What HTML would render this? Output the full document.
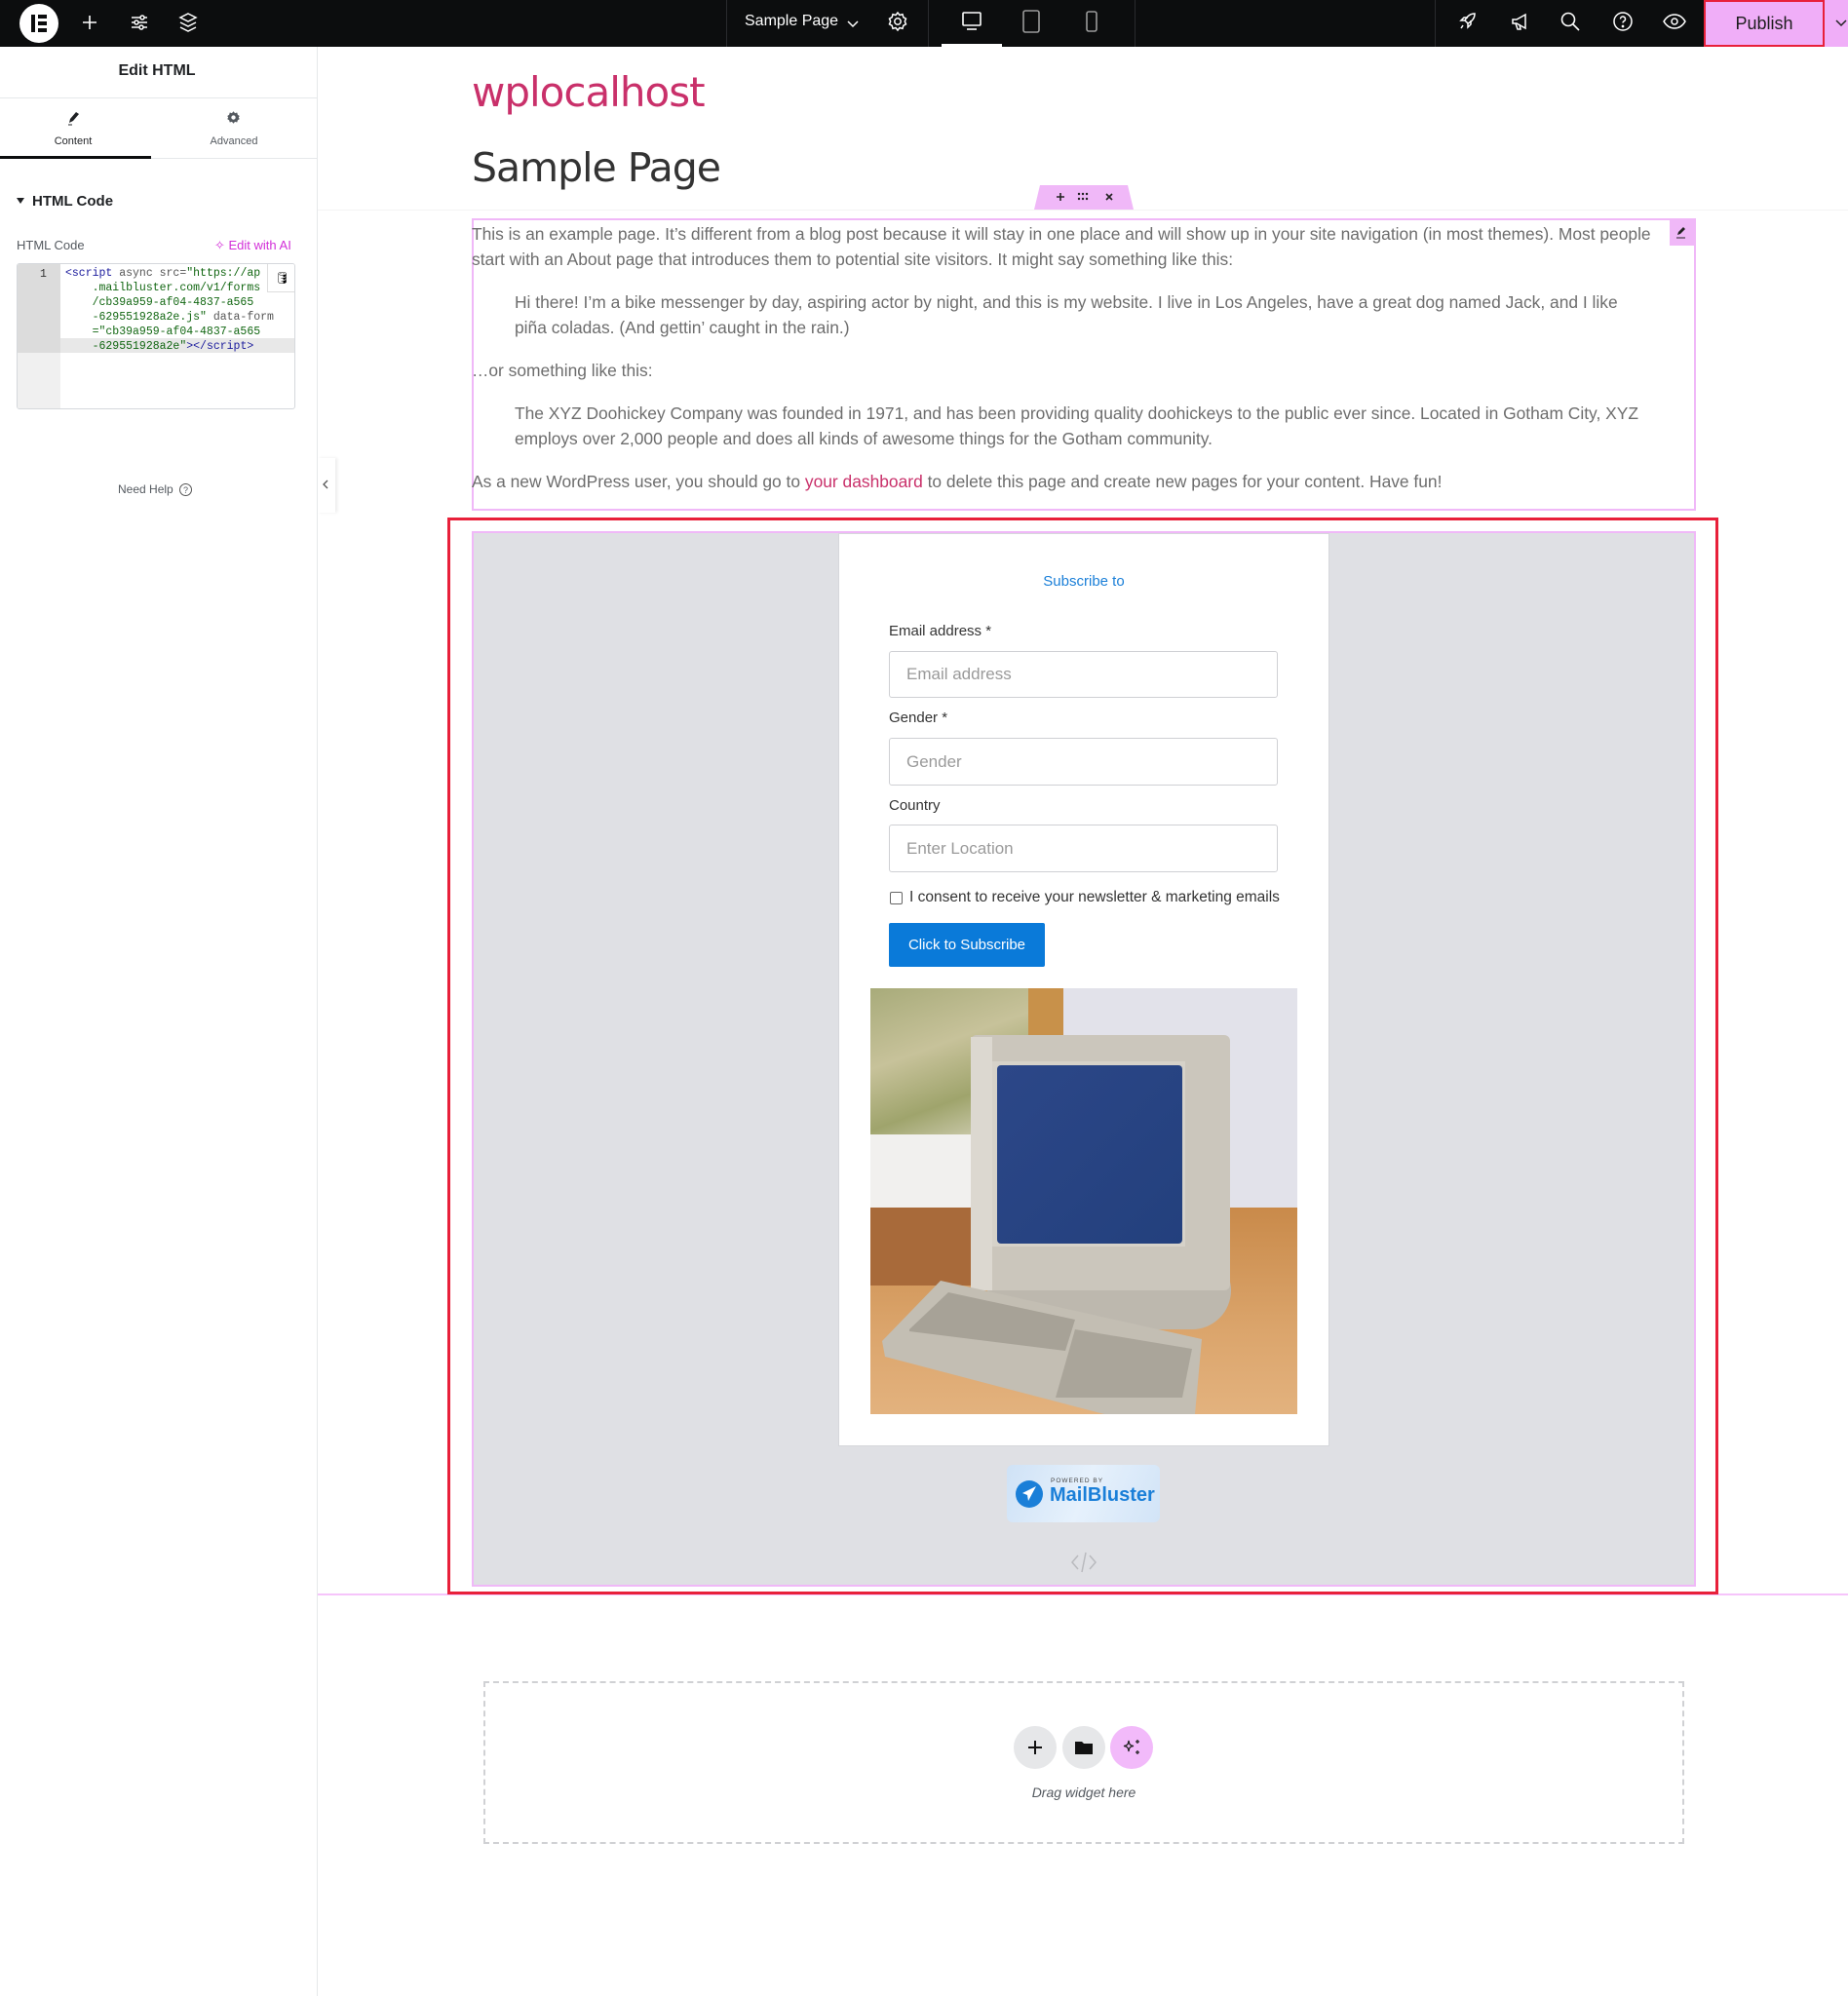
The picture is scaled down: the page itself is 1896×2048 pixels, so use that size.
<!DOCTYPE html>
<html><head><meta charset="utf-8">
<style>
*{box-sizing:border-box;margin:0;padding:0}
body{width:1896px;height:2046px;position:relative;background:#fff;font-family:"Liberation Sans",Arial,sans-serif;overflow:hidden}
.a{position:absolute}
.top{left:0;top:0;width:1896px;height:48px;background:#0c0d0e}
.vd{top:0;width:1px;height:48px;background:#2a2b2e}
svg{display:block}
.ptxt{font-size:17.4px;color:#6d6d6d;line-height:26px;white-space:nowrap}
.lbl{font-size:15px;color:#333}
.inp{border:1px solid #cfd0d4;border-radius:3px;background:#fff;font-size:17px;color:#9a9a9a;padding-left:17px;display:flex;align-items:center}
</style></head><body>

<!-- top bar -->
<div class="a top"></div>
<div class="a" style="left:20px;top:4px;width:40px;height:40px;border-radius:50%;background:#fff"></div>
<div class="a" style="left:32px;top:15px;width:4px;height:18px;background:#0c0d0e"></div>
<div class="a" style="left:39px;top:15px;width:9px;height:4px;background:#0c0d0e"></div>
<div class="a" style="left:39px;top:22px;width:9px;height:4px;background:#0c0d0e"></div>
<div class="a" style="left:39px;top:29px;width:9px;height:4px;background:#0c0d0e"></div>
<svg class="a" style="left:82px;top:13px" width="20" height="20" viewBox="0 0 20 20"><path d="M10 3v14M3 10h14" stroke="#fff" stroke-width="1.6"/></svg>
<svg class="a" style="left:132px;top:12px" width="22" height="22" viewBox="0 0 22 22" fill="none" stroke="#fff" stroke-width="1.5"><path d="M3 6h16M3 11h16M3 16h16"/><circle cx="14" cy="6" r="2" fill="#0c0d0e"/><circle cx="8" cy="11" r="2" fill="#0c0d0e"/><circle cx="13" cy="16" r="2" fill="#0c0d0e"/></svg>
<svg class="a" style="left:182px;top:11px" width="22" height="24" viewBox="0 0 22 24" fill="none" stroke="#fff" stroke-width="1.5"><path d="M11 3l8 4-8 4-8-4z"/><path d="M3 12l8 4 8-4"/><path d="M3 17l8 4 8-4"/></svg>
<div class="a vd" style="left:745px"></div>
<div class="a" style="left:764px;top:13px;color:#fff;font-size:16px">Sample Page</div>
<svg class="a" style="left:868px;top:17px" width="14" height="14" viewBox="0 0 14 14"><path d="M2 5l5 5 5-5" stroke="#fff" stroke-width="1.5" fill="none"/></svg>
<svg class="a" style="left:909px;top:10px" width="24" height="24" viewBox="0 0 24 24" fill="none" stroke="#fff" stroke-width="1.5"><circle cx="12" cy="12" r="3.2"/><path d="M12 3l2 2.5 3-.8.8 3 2.7 1.5-1.2 2.8 1.2 2.8-2.7 1.5-.8 3-3-.8L12 21l-2-2.5-3 .8-.8-3L3.5 14.8 4.7 12 3.5 9.2l2.7-1.5.8-3 3 .8z"/></svg>
<div class="a vd" style="left:952px"></div>
<svg class="a" style="left:986px;top:11px" width="22" height="22" viewBox="0 0 22 22" fill="none" stroke="#fff" stroke-width="1.6"><rect x="2" y="2" width="18" height="13" rx="1"/><path d="M6 19h10"/></svg>
<div class="a" style="left:966px;top:45px;width:62px;height:3px;background:#fff"></div>
<svg class="a" style="left:1048px;top:9px" width="20" height="26" viewBox="0 0 20 26" fill="none" stroke="#9a9a9a" stroke-width="1.6"><rect x="2" y="2" width="16" height="22" rx="2"/></svg>
<svg class="a" style="left:1113px;top:10px" width="14" height="24" viewBox="0 0 14 24" fill="none" stroke="#9a9a9a" stroke-width="1.6"><rect x="2" y="2" width="10" height="20" rx="2"/></svg>
<div class="a vd" style="left:1164px"></div>
<div class="a vd" style="left:1472px"></div>
<svg class="a" style="left:1495px;top:11px" width="22" height="22" viewBox="0 0 22 22" fill="none" stroke="#fff" stroke-width="1.5"><path d="M18 3c-5 0-8 3-10 7l3 3c4-2 7-5 7-10z"/><path d="M8 10H4l3-3h4M11 13v4l3-3v-4"/><path d="M6 15l-2 3"/></svg>
<svg class="a" style="left:1548px;top:10px" width="24" height="24" viewBox="0 0 24 24" fill="none" stroke="#fff" stroke-width="1.5"><path d="M4 10h4l9-5v14l-9-5H4z"/><path d="M7 14l2 6h3l-1-5"/></svg>
<svg class="a" style="left:1599px;top:10px" width="24" height="24" viewBox="0 0 24 24" fill="none" stroke="#fff" stroke-width="1.6"><circle cx="10" cy="10" r="6.5"/><path d="M15 15l6 6"/></svg>
<svg class="a" style="left:1653px;top:10px" width="24" height="24" viewBox="0 0 24 24" fill="none" stroke="#fff" stroke-width="1.5"><circle cx="12" cy="12" r="9"/><path d="M9.5 9.5a2.5 2.5 0 1 1 3.5 2.3c-.7.4-1 .9-1 1.7"/><circle cx="12" cy="17" r=".6" fill="#fff"/></svg>
<svg class="a" style="left:1705px;top:10px" width="26" height="24" viewBox="0 0 26 24" fill="none" stroke="#fff" stroke-width="1.5"><path d="M2 12c3-5 7-7 11-7s8 2 11 7c-3 5-7 7-11 7S5 17 2 12z"/><circle cx="13" cy="12" r="3"/></svg>
<div class="a" style="left:1748px;top:0;width:148px;height:48px;background:#f0aef8"></div>
<div class="a" style="left:1748px;top:0;width:124px;height:48px;border:2px solid #e8203a;display:flex;align-items:center;justify-content:center;font-size:18px;color:#1c1c1c">Publish</div>
<svg class="a" style="left:1882px;top:16px" width="14" height="14" viewBox="0 0 14 14"><path d="M2 5l5 5 5-5" stroke="#222" stroke-width="1.5" fill="none"/></svg>

<!-- left panel -->
<div class="a" style="left:325px;top:48px;width:1px;height:2000px;background:#e6e8ea"></div>
<div class="a" style="left:0;top:64px;width:322px;text-align:center;font-size:16px;font-weight:bold;color:#1f2124">Edit HTML</div>
<div class="a" style="left:0;top:100px;width:325px;height:1px;background:#e6e8ea"></div>
<div class="a" style="left:0;top:162px;width:325px;height:1px;background:#e6e8ea"></div>
<div class="a" style="left:0;top:160px;width:155px;height:3px;background:#0c0d0e"></div>
<svg class="a" style="left:68px;top:113px" width="14" height="16" viewBox="0 0 14 16"><path d="M3 13l1-4 6-7 3 2-6 7z" fill="#1f2124"/><path d="M2 15h4" stroke="#1f2124"/></svg>
<div class="a" style="left:0;top:139px;width:150px;text-align:center;font-size:11px;color:#1f2124">Content</div>
<svg class="a" style="left:232px;top:113px" width="15" height="15" viewBox="0 0 24 24"><path d="M12 2l2.5 3 3.5-1 1 3.5 3 2-1.5 2.5 1.5 2.5-3 2-1 3.5-3.5-1L12 22l-2.5-3-3.5 1-1-3.5-3-2L3.5 12 2 9.5l3-2 1-3.5 3.5 1z" fill="#555a60"/><circle cx="12" cy="12" r="3.5" fill="#fff"/></svg>
<div class="a" style="left:165px;top:139px;width:150px;text-align:center;font-size:11px;color:#555a60">Advanced</div>
<svg class="a" style="left:16px;top:201px" width="10" height="10" viewBox="0 0 10 10"><path d="M1 2h8L5 8z" fill="#1f2124"/></svg>
<div class="a" style="left:33px;top:198px;font-size:15px;font-weight:bold;color:#1f2124">HTML Code</div>
<div class="a" style="left:17px;top:244px;font-size:13px;color:#555a60">HTML Code</div>
<div class="a" style="left:220px;top:244px;font-size:13px;color:#d22fd8">✧ Edit with AI</div>
<div class="a" style="left:17px;top:270px;width:286px;height:150px;border:1px solid #d5d8dc;border-radius:3px;background:#fff;overflow:hidden">
 <div class="a" style="left:0;top:0;width:44px;height:150px;background:#f0f0f0"></div>
 <div class="a" style="left:0;top:0;width:44px;height:91px;background:#dcdcdc"></div>
 <div class="a" style="left:44px;top:76px;width:242px;height:15px;background:#e8e8e8"></div>
 <div class="a" style="left:23px;top:4px;font-family:'Liberation Mono',monospace;font-size:11.5px;color:#333">1</div>
 <div class="a" style="left:49px;top:2px;font-family:'Liberation Mono',monospace;font-size:11.5px;line-height:15px;white-space:pre;color:#116611"><span style="color:#1a1a9c">&lt;script</span> <span style="color:#555">async src=</span>"https://ap
    .mailbluster.com/v1/forms
    /cb39a959-af04-4837-a565
    -629551928a2e.js" <span style="color:#555">data-form</span>
    ="cb39a959-af04-4837-a565
    -629551928a2e"<span style="color:#1a1a9c">&gt;&lt;/script&gt;</span></div>
 <div class="a" style="left:256px;top:0;width:30px;height:29px;background:#fff;border-left:1px solid #ddd;border-bottom:1px solid #ddd;font-size:12px;text-align:center;line-height:29px">🛢</div>
</div>
<div class="a" style="left:121px;top:495px;font-size:12px;color:#555a60">Need Help <span style="display:inline-block;width:13px;height:13px;border:1px solid #555;border-radius:50%;font-size:9px;text-align:center;line-height:12px;margin-left:3px">?</span></div>
<div class="a" style="left:326px;top:470px;width:18px;height:56px;background:#fff;box-shadow:2px 0 3px rgba(0,0,0,.08)"></div>
<svg class="a" style="left:329px;top:491px" width="10" height="12" viewBox="0 0 10 12"><path d="M7 2L3 6l4 4" stroke="#555" stroke-width="1.3" fill="none"/></svg>

<!-- page content -->
<div class="a" style="left:484px;top:70px;font-size:42px;color:#c9306a;font-family:'DejaVu Sans','Liberation Sans',sans-serif;letter-spacing:-1px">wplocalhost</div>
<div class="a" style="left:484px;top:148px;font-size:41px;color:#333;font-family:'DejaVu Sans','Liberation Sans',sans-serif;letter-spacing:-1px">Sample Page</div>
<div class="a" style="left:326px;top:215px;width:1570px;height:1px;background:#f4f4f4"></div>
<div class="a" style="left:484px;top:224px;width:1256px;height:300px;border:2px solid #f0b8f8"></div>
<svg class="a" style="left:1061px;top:190px" width="102" height="25" viewBox="0 0 102 25"><path d="M6 0h90l6 25H0z" fill="#f0b8f8"/><path d="M27 8v8M23 12h8" stroke="#222" stroke-width="1.6"/><g fill="#222"><circle cx="46" cy="9" r="1.2"/><circle cx="50" cy="9" r="1.2"/><circle cx="54" cy="9" r="1.2"/><circle cx="46" cy="14" r="1.2"/><circle cx="50" cy="14" r="1.2"/><circle cx="54" cy="14" r="1.2"/></g><path d="M74 9l6 6M80 9l-6 6" stroke="#222" stroke-width="1.6"/></svg>
<div class="a" style="left:1713px;top:226px;width:25px;height:26px;background:#f0b8f8"></div>
<svg class="a" style="left:1718px;top:231px" width="14" height="14" viewBox="0 0 14 14"><path d="M3 10l1-3 5-5 2 2-5 5z" fill="#222"/><path d="M2 13h9" stroke="#222"/></svg>
<div class="a ptxt" style="left:484px;top:227px">This is an example page. It’s different from a blog post because it will stay in one place and will show up in your site navigation (in most themes). Most people</div>
<div class="a ptxt" style="left:484px;top:253px">start with an About page that introduces them to potential site visitors. It might say something like this:</div>
<div class="a ptxt" style="left:528px;top:297px">Hi there! I’m a bike messenger by day, aspiring actor by night, and this is my website. I live in Los Angeles, have a great dog named Jack, and I like</div>
<div class="a ptxt" style="left:528px;top:323px">piña coladas. (And gettin’ caught in the rain.)</div>
<div class="a ptxt" style="left:484px;top:367px">…or something like this:</div>
<div class="a ptxt" style="left:528px;top:411px">The XYZ Doohickey Company was founded in 1971, and has been providing quality doohickeys to the public ever since. Located in Gotham City, XYZ</div>
<div class="a ptxt" style="left:528px;top:437px">employs over 2,000 people and does all kinds of awesome things for the Gotham community.</div>
<div class="a ptxt" style="left:484px;top:481px">As a new WordPress user, you should go to <span style="color:#c9306a">your dashboard</span> to delete this page and create new pages for your content. Have fun!</div>

<!-- html widget -->
<div class="a" style="left:326px;top:1635px;width:1570px;height:2px;background:#f6c4fb"></div>
<div class="a" style="left:484px;top:545px;width:1256px;height:1083px;background:#dfe0e4;border:2px solid #f0b8f8"></div>
<div class="a" style="left:459px;top:531px;width:1304px;height:1105px;border:3px solid #e8203a"></div>
<div class="a" style="left:860px;top:547px;width:504px;height:937px;background:#fff;border:1px solid #d6d7db"></div>
<div class="a" style="left:860px;top:588px;width:504px;text-align:center;font-size:15px;color:#1a7fd8">Subscribe to</div>
<div class="a lbl" style="left:912px;top:639px">Email address *</div>
<div class="a inp" style="left:912px;top:668px;width:399px;height:48px">Email address</div>
<div class="a lbl" style="left:912px;top:728px">Gender *</div>
<div class="a inp" style="left:912px;top:757px;width:399px;height:49px">Gender</div>
<div class="a lbl" style="left:912px;top:818px">Country</div>
<div class="a inp" style="left:912px;top:846px;width:399px;height:49px">Enter Location</div>
<div class="a" style="left:913px;top:915px;width:13px;height:13px;border:1px solid #666;border-radius:2px"></div>
<div class="a" style="left:933px;top:912px;font-size:15.5px;color:#333">I consent to receive your newsletter &amp; marketing emails</div>
<div class="a" style="left:912px;top:947px;width:160px;height:45px;background:#0a7ad9;border-radius:2px;color:#fff;font-size:15px;display:flex;align-items:center;justify-content:center">Click to Subscribe</div>

<!-- photo -->
<div class="a" style="left:893px;top:1014px;width:438px;height:437px;overflow:hidden;background:#e2e2ea">
 <div class="a" style="left:0;top:0;width:162px;height:150px;background:linear-gradient(160deg,#a8ab7a,#c7c29a 40%,#9fa46c 70%,#d9d6c0)"></div>
 <div class="a" style="left:162px;top:0;width:36px;height:48px;background:#c8914a"></div>
 <div class="a" style="left:0;top:150px;width:198px;height:80px;background:#f1f0ee"></div>
 <div class="a" style="left:0;top:225px;width:438px;height:212px;background:linear-gradient(180deg,#c98a4a,#dba56c 60%,#e3b27e)"></div>
 <div class="a" style="left:0;top:225px;width:140px;height:80px;background:#a86a3a"></div>
 <div class="a" style="left:120px;top:270px;width:250px;height:80px;border-radius:40px;background:#bdb8ae"></div>
 <div class="a" style="left:103px;top:48px;width:266px;height:262px;background:#cbc6bc;border-radius:6px"></div>
 <div class="a" style="left:103px;top:50px;width:22px;height:260px;background:#dcd8d0"></div>
 <div class="a" style="left:125px;top:75px;width:198px;height:190px;background:#d6d2c9"></div>
 <div class="a" style="left:130px;top:79px;width:190px;height:183px;background:linear-gradient(135deg,#2c4788,#23407d);border-radius:4px"></div>
 <svg class="a" style="left:0;top:0" width="438" height="437" viewBox="0 0 438 437"><path d="M12 362L72 300 340 360 333 437 240 437 15 378z" fill="#c3beb3"/><path d="M40 350L80 312 210 340 200 372 40 352z" fill="#a7a297"/><path d="M210 350L330 370 320 420 190 420z" fill="#aaa59a"/></svg>
</div>

<!-- mailbluster badge -->
<div class="a" style="left:1033px;top:1503px;width:157px;height:59px;border-radius:6px;background:linear-gradient(110deg,#cfe2f6,#e6f1fc 50%,#d2e4f7)"></div>
<svg class="a" style="left:1041px;top:1518px" width="30" height="30" viewBox="0 0 30 30"><circle cx="15" cy="15" r="14" fill="#1a7fd8"/><path d="M22 7L8 14l5 2 1 6z" fill="#fff"/></svg>
<div class="a" style="left:1078px;top:1516px;font-size:6.5px;letter-spacing:1px;color:#444">POWERED BY</div>
<div class="a" style="left:1077px;top:1523px;font-size:20px;font-weight:bold;color:#1a7fd8">MailBluster</div>
<svg class="a" style="left:1098px;top:1590px" width="28" height="26" viewBox="0 0 28 26" fill="none" stroke="#b9babe" stroke-width="1.5"><path d="M8 6L2 13l6 7M20 6l6 7-6 7M16 3l-4 20"/></svg>

<!-- drop zone -->
<div class="a" style="left:496px;top:1725px;width:1232px;height:167px;border:2px dashed #d0d1d4"></div>
<div class="a" style="left:1040px;top:1771px;width:44px;height:44px;border-radius:50%;background:#e6e7e9"></div>
<svg class="a" style="left:1052px;top:1783px" width="20" height="20" viewBox="0 0 20 20"><path d="M10 3v14M3 10h14" stroke="#111" stroke-width="2"/></svg>
<div class="a" style="left:1090px;top:1771px;width:44px;height:44px;border-radius:50%;background:#e6e7e9"></div>
<svg class="a" style="left:1102px;top:1784px" width="20" height="18" viewBox="0 0 20 18"><path d="M1 3h7l2 2h9v11H1z" fill="#111"/></svg>
<div class="a" style="left:1139px;top:1771px;width:44px;height:44px;border-radius:50%;background:#f2bafa"></div>
<svg class="a" style="left:1150px;top:1782px" width="22" height="22" viewBox="0 0 22 22" fill="none" stroke="#222" stroke-width="1.3"><path d="M8 4c.5 4 1.5 5 5 5.5-3.5.5-4.5 1.5-5 5.5-.5-4-1.5-5-5-5.5 3.5-.5 4.5-1.5 5-5.5z"/><path d="M17 3v4M15 5h4M17 14v4M15 16h4"/></svg>
<div class="a" style="left:496px;top:1831px;width:1232px;text-align:center;font-size:14px;font-style:italic;color:#555a60">Drag widget here</div>

</body></html>
